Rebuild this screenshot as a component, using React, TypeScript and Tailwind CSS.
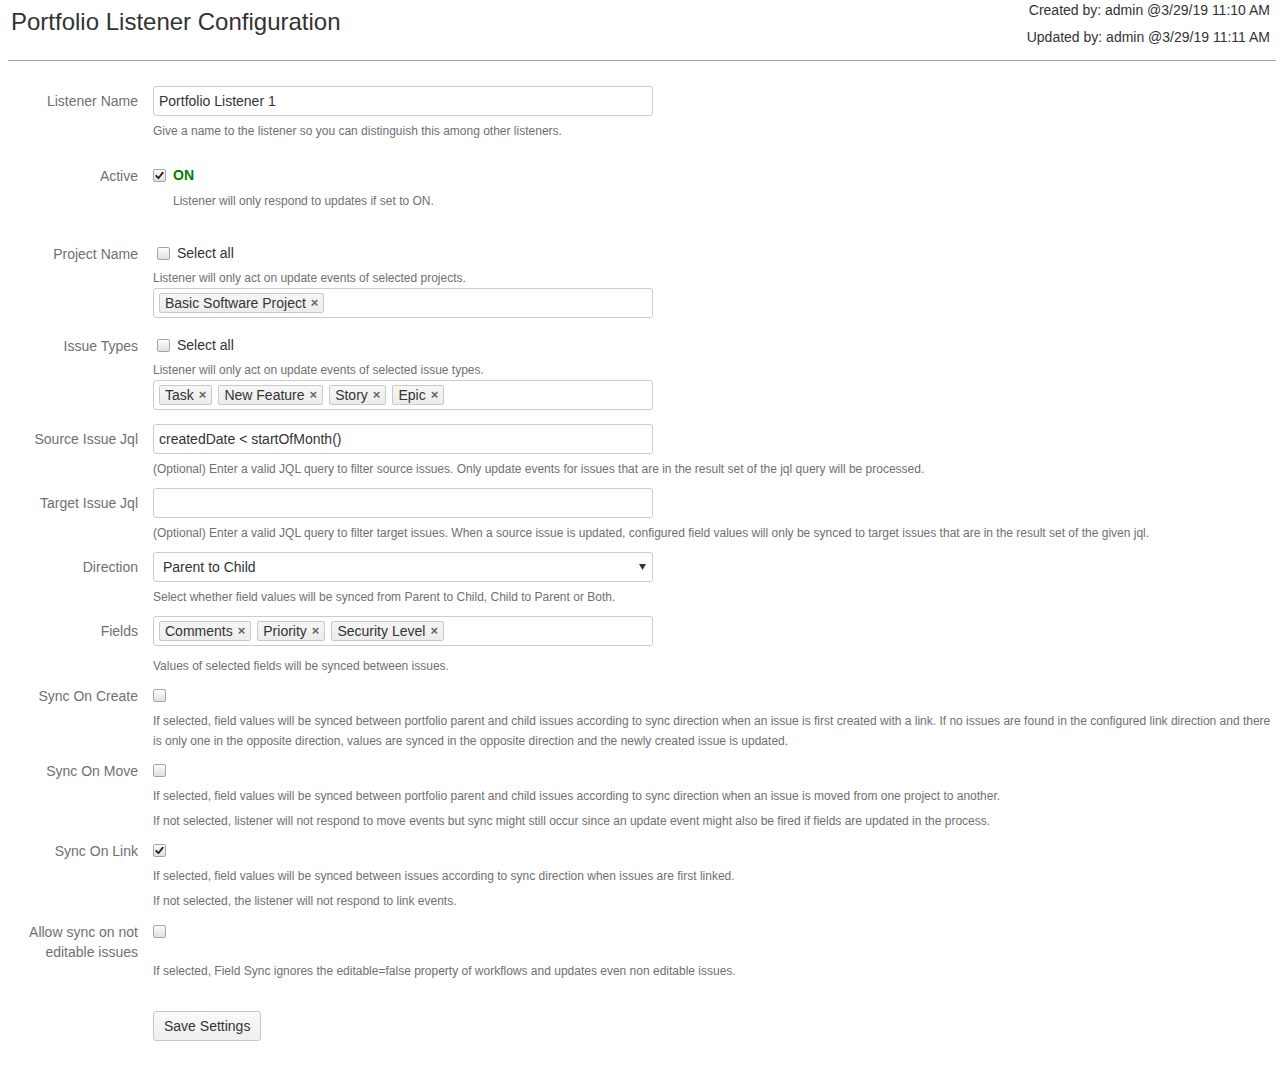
import React from "react";

const font = { fontFamily: '"Liberation Sans", Arial, sans-serif' };

function Check({ checked, className = "" }: { checked?: boolean; className?: string }) {
  return (
    <span
      className={`inline-flex h-[13px] w-[13px] shrink-0 items-center justify-center rounded-[2px] border border-[#a6a6a6] bg-gradient-to-b from-[#fcfcfc] to-[#e0e0e0] ${className}`}
    >
      {checked && (
        <svg width="9" height="9" viewBox="0 0 9 9">
          <path d="M1.2 4.8 L3.4 7.2 L7.8 1.6" fill="none" stroke="#222" strokeWidth="1.8" strokeLinecap="round" strokeLinejoin="round" />
        </svg>
      )}
    </span>
  );
}

function Tag({ text }: { text: string }) {
  return (
    <span className="inline-flex h-[20px] items-center rounded-[2px] border border-[#cacaca] bg-gradient-to-b from-[#f6f6f6] to-[#ececec] pl-[5px] pr-[5px] text-[14px] leading-[18px] text-[#333]">
      {text}
      <span className="ml-[5px] text-[13px] font-bold text-[#666]">×</span>
    </span>
  );
}

function TagBox({ tags }: { tags: string[] }) {
  return (
    <div className="flex h-[30px] w-[500px] items-center gap-[6px] rounded-[3px] border border-[#cccccc] bg-white px-[5px]">
      {tags.map((t) => (
        <Tag key={t} text={t} />
      ))}
    </div>
  );
}

function Help({ children, className = "" }: { children: React.ReactNode; className?: string }) {
  return <div className={`text-[12px] leading-[20px] text-[#707070] ${className}`}>{children}</div>;
}

function Row({
  label,
  lh = 30,
  className = "",
  children,
}: {
  label: React.ReactNode;
  lh?: 20 | 30;
  className?: string;
  children: React.ReactNode;
}) {
  return (
    <div className={`flex ${className}`}>
      <div
        className={`w-[130px] shrink-0 text-right text-[14px] text-[#707070] ${lh === 30 ? "leading-[30px]" : "pt-[1px] leading-[20px]"}`}
      >
        {label}
      </div>
      <div className="ml-[15px] min-w-0 flex-1">{children}</div>
    </div>
  );
}

function TextInput({ value }: { value: string }) {
  return (
    <div className="flex h-[30px] w-[500px] items-center rounded-[3px] border border-[#cccccc] bg-white px-[5px] text-[14px] text-[#333]">
      {value}
    </div>
  );
}

export default function App() {
  return (
    <div className="min-h-[1070px] bg-white px-[8px]" style={font}>
      <div className="flex h-[60px] justify-between">
        <div className="pl-[3px] pt-[8px] text-[24px] leading-[28px] text-[#333]">Portfolio Listener Configuration</div>
        <div className="pr-[6px] text-right text-[14px] leading-[20px] text-[#333]">
          <div>Created by: admin @3/29/19 11:10 AM</div>
          <div className="mt-[7px]">Updated by: admin @3/29/19 11:11 AM</div>
        </div>
      </div>
      <div className="border-t border-[#a5a5a5]" />

      <Row label="Listener Name" className="mt-[25px]">
        <TextInput value="Portfolio Listener 1" />
        <Help className="mt-[5px]">Give a name to the listener so you can distinguish this among other listeners.</Help>
      </Row>

      <Row label="Active" lh={20} className="mt-[24px]">
        <div className="flex h-[20px] items-center">
          <Check checked />
          <span className="ml-[7px] pt-[1px] text-[14px] font-bold text-[#008000]">ON</span>
        </div>
        <Help className="ml-[20px] mt-[6px]">Listener will only respond to updates if set to ON.</Help>
      </Row>

      <Row label="Project Name" lh={20} className="mt-[32px]">
        <div className="flex h-[20px] items-center">
          <Check className="ml-[4px]" />
          <span className="ml-[7px] text-[14px] text-[#333]">Select all</span>
        </div>
        <Help className="mt-[5px]">Listener will only act on update events of selected projects.</Help>
        <TagBox tags={["Basic Software Project"]} />
      </Row>

      <Row label="Issue Types" lh={20} className="mt-[17px]">
        <div className="flex h-[20px] items-center">
          <Check className="ml-[4px]" />
          <span className="ml-[7px] text-[14px] text-[#333]">Select all</span>
        </div>
        <Help className="mt-[5px]">Listener will only act on update events of selected issue types.</Help>
        <TagBox tags={["Task", "New Feature", "Story", "Epic"]} />
      </Row>

      <Row label="Source Issue Jql" className="mt-[14px]">
        <TextInput value="createdDate < startOfMonth()" />
        <Help className="mt-[5px]">
          (Optional) Enter a valid JQL query to filter source issues. Only update events for issues that are in the result set of the jql query will be processed.
        </Help>
      </Row>

      <Row label="Target Issue Jql" className="mt-[9px]">
        <TextInput value="" />
        <Help className="mt-[5px]">
          (Optional) Enter a valid JQL query to filter target issues. When a source issue is updated, configured field values will only be synced to target issues that are in the result set of the given jql.
        </Help>
      </Row>

      <Row label="Direction" className="mt-[9px]">
        <div className="flex h-[30px] w-[500px] items-center justify-between rounded-[3px] border border-[#cccccc] bg-white pl-[9px] pr-[6px] text-[14px] text-[#333]">
          <span className="pt-[1px]">Parent to Child</span>
          <svg width="7" height="6" viewBox="0 0 7 6">
            <path d="M0 0 H7 L3.5 6 Z" fill="#333" />
          </svg>
        </div>
        <Help className="mt-[5px]">Select whether field values will be synced from Parent to Child, Child to Parent or Both.</Help>
      </Row>

      <Row label="Fields" className="mt-[9px]">
        <TagBox tags={["Comments", "Priority", "Security Level"]} />
        <Help className="mt-[10px]">Values of selected fields will be synced between issues.</Help>
      </Row>

      <Row label="Sync On Create" lh={20} className="mt-[9px]">
        <div className="flex h-[20px] items-center">
          <Check />
        </div>
        <Help className="mt-[6px]">
          If selected, field values will be synced between portfolio parent and child issues according to sync direction when an issue is first created with a link. If no issues are found in the configured link direction and there is only one in the opposite direction, values are synced in the opposite direction and the newly created issue is updated.
        </Help>
      </Row>

      <Row label="Sync On Move" lh={20} className="mt-[9px]">
        <div className="flex h-[20px] items-center">
          <Check />
        </div>
        <Help className="mt-[6px]">
          If selected, field values will be synced between portfolio parent and child issues according to sync direction when an issue is moved from one project to another.
        </Help>
        <Help className="mt-[5px]">
          If not selected, listener will not respond to move events but sync might still occur since an update event might also be fired if fields are updated in the process.
        </Help>
      </Row>

      <Row label="Sync On Link" lh={20} className="mt-[9px]">
        <div className="flex h-[20px] items-center">
          <Check checked />
        </div>
        <Help className="mt-[6px]">If selected, field values will be synced between issues according to sync direction when issues are first linked.</Help>
        <Help className="mt-[5px]">If not selected, the listener will not respond to link events.</Help>
      </Row>

      <Row label="Allow sync on not editable issues" lh={20} className="mt-[10px]">
        <div className="flex h-[20px] items-center">
          <Check />
        </div>
        <Help className="mt-[20px]">If selected, Field Sync ignores the editable=false property of workflows and updates even non editable issues.</Help>
      </Row>

      <div className="ml-[145px] mt-[30px] pb-[29px]">
        <button className="h-[30px] rounded-[3px] border border-[#c6c6c6] bg-gradient-to-b from-[#f9f9f9] to-[#efefef] px-[10px] text-[14px] text-[#333]">
          Save Settings
        </button>
      </div>
    </div>
  );
}
